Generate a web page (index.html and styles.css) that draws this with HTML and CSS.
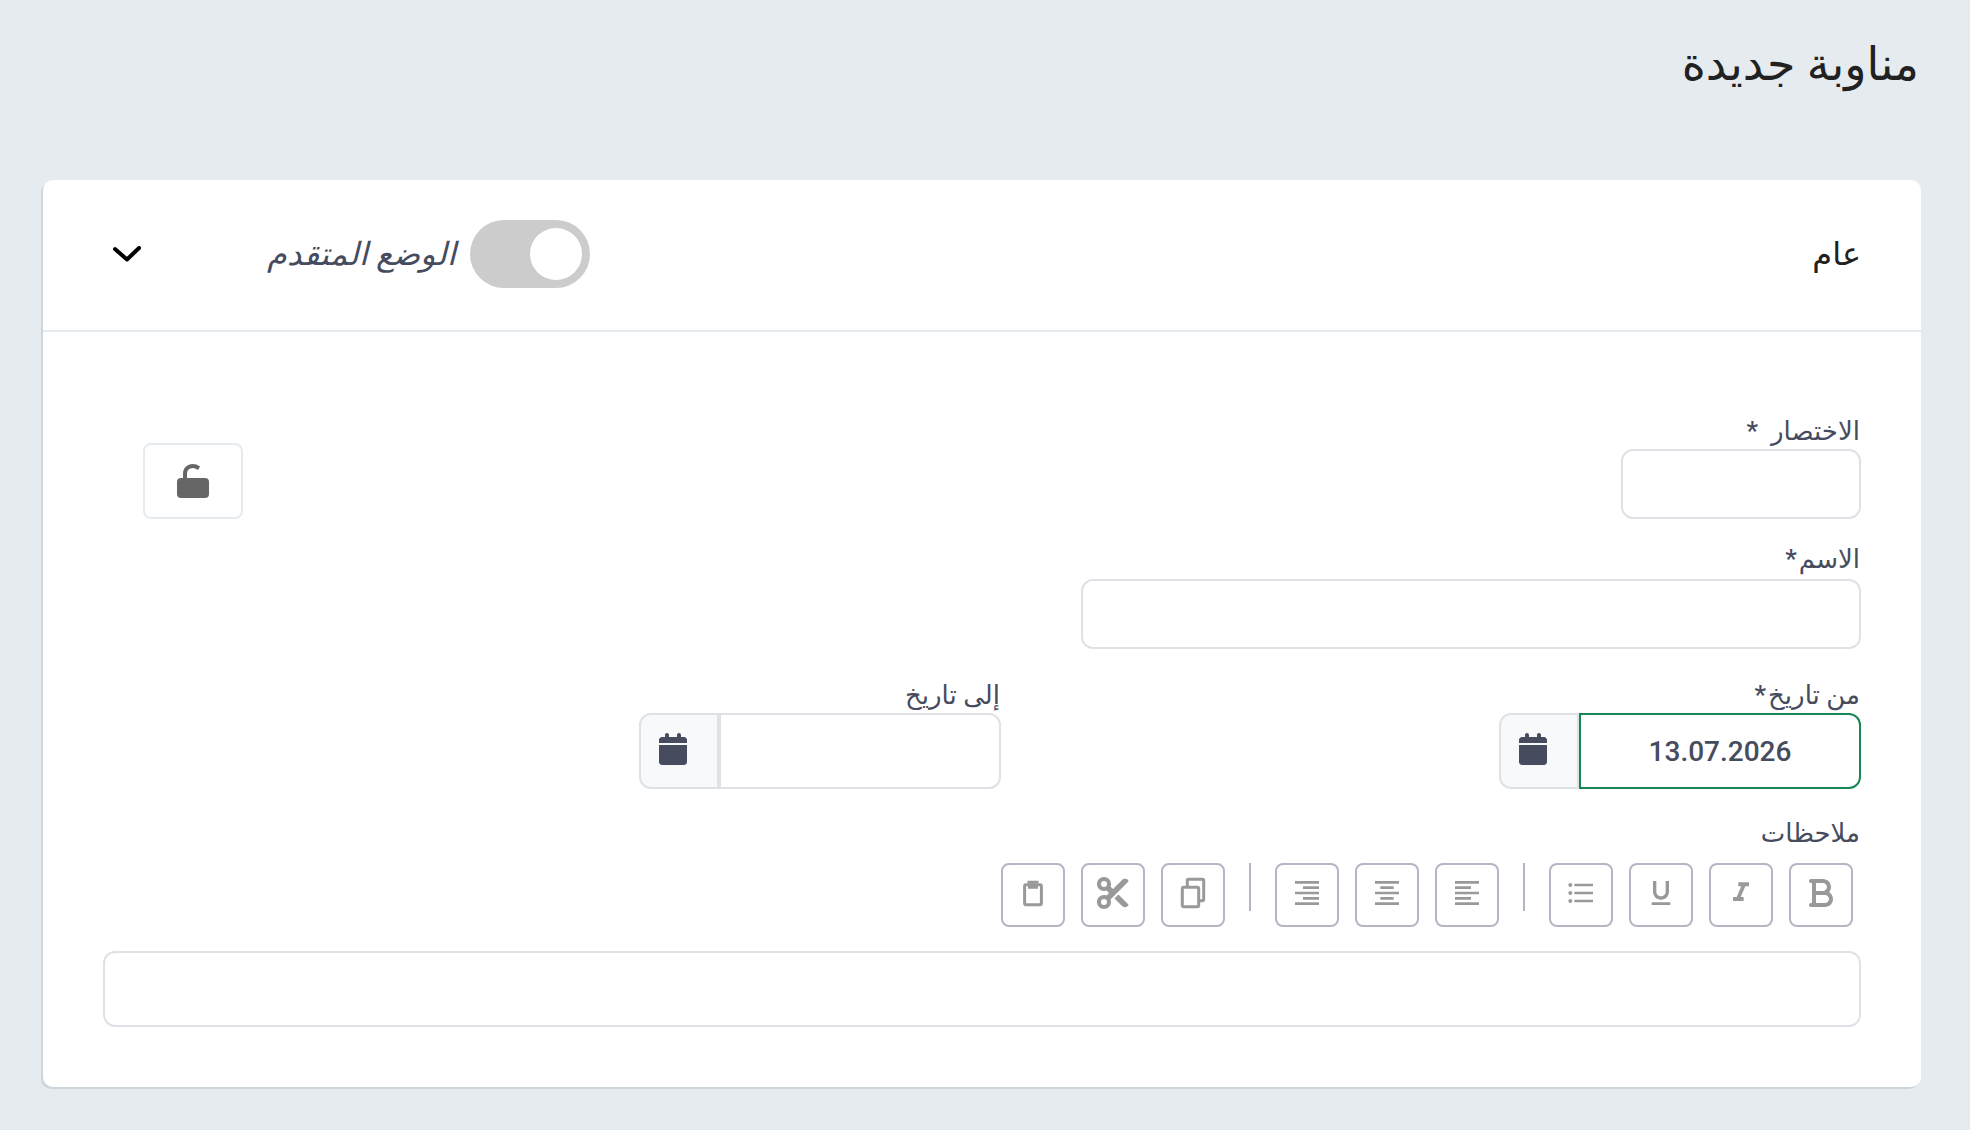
FILE: index.html
```html
<!DOCTYPE html>
<html lang="ar" dir="rtl">
<head>
    <meta charset="UTF-8">
    <meta name="viewport" content="width=device-width, initial-scale=1.0">
    <title>مناوبة جديدة</title>
    <link rel="stylesheet" href="styles.css">
</head>
<body>
    <h1>مناوبة جديدة</h1>

    <form class="card">
        <div class="card-header">
            <h2>عام</h2>
            <div class="header-tools">
                <label class="switch-label">
                    <input type="checkbox" class="switch">
                    <span>الوضع المتقدم</span>
                </label>
                <button type="button" class="collapse-btn" aria-label="طي">
                    <svg width="28" height="16" viewBox="0 0 28 16" fill="none" stroke="#000" stroke-width="4" stroke-linecap="round" stroke-linejoin="round"><path d="M2 3l12 10.500L26 2"/></svg>
                </button>
            </div>
        </div>

        <div class="card-body">
            <div class="row">
                <div class="field short">
                    <label for="shortName">الاختصار &nbsp;*</label>
                    <input type="text" id="shortName">
                </div>
                <button type="button" class="lock-btn" aria-label="قفل">
                    <svg width="32" height="34" viewBox="0 0 32 34"><rect y="14" width="32" height="20" rx="4" fill="#666"/><path d="M8 16V10C8 2.500 15.500 0 22 4.200" fill="none" stroke="#666" stroke-width="4"/></svg>
                </button>
            </div>

            <div class="field name">
                <label for="fullName">الاسم<span class="required">*</span></label>
                <input type="text" id="fullName">
            </div>

            <div class="dates">
                <div class="field">
                    <label for="fromDate">من تاريخ<span class="required">*</span></label>
                    <div class="date-group">
                        <input type="text" id="fromDate" class="valid" value="13.07.2026">
                        <button type="button" aria-label="التقويم">
                            <svg width="28" height="32" viewBox="0 0 448 512" fill="currentColor"><path d="M96 32V64H48C21.500 64 0 85.500 0 112v48H448V112c0-26.500-21.500-48-48-48H352V32c0-17.700-14.300-32-32-32s-32 14.300-32 32V64H160V32c0-17.700-14.300-32-32-32S96 14.300 96 32zM448 192H0V464c0 26.500 21.500 48 48 48H400c26.500 0 48-21.500 48-48V192z"/></svg>
                        </button>
                    </div>
                </div>
                <div class="field">
                    <label for="toDate">إلى تاريخ</label>
                    <div class="date-group">
                        <input type="text" id="toDate">
                        <button type="button" aria-label="التقويم">
                            <svg width="28" height="32" viewBox="0 0 448 512" fill="currentColor"><path d="M96 32V64H48C21.500 64 0 85.500 0 112v48H448V112c0-26.500-21.500-48-48-48H352V32c0-17.700-14.300-32-32-32s-32 14.300-32 32V64H160V32c0-17.700-14.300-32-32-32S96 14.300 96 32zM448 192H0V464c0 26.500 21.500 48 48 48H400c26.500 0 48-21.500 48-48V192z"/></svg>
                        </button>
                    </div>
                </div>
            </div>

            <div class="field notes">
                <label for="notes">ملاحظات</label>
                <div class="toolbar">
                    <button type="button" aria-label="عريض">
                        <svg viewBox="-64 0 512 512"><path d="M0 64C0 46.300 14.300 32 32 32H80 96 224c70.700 0 128 57.300 128 128c0 31.300-11.300 60.100-30 82.300c37.100 22.400 62 63.100 62 109.700c0 70.700-57.300 128-128 128H96 80 32c-17.700 0-32-14.300-32-32s14.300-32 32-32H48V256 96H32C14.300 96 0 81.700 0 64zM224 224c35.300 0 64-28.700 64-64s-28.700-64-64-64H112V224H224zM112 288V416H256c35.300 0 64-28.700 64-64s-28.700-64-64-64H224 112z"/></svg>
                    </button>
                    <button type="button" aria-label="مائل">
                        <svg viewBox="0 0 24 24"><path d="M10 4v3h2.210l-3.420 8H6v3h8v-3h-2.210l3.420-8H18V4z"/></svg>
                    </button>
                    <button type="button" aria-label="تسطير">
                        <svg viewBox="0 0 24 24"><path d="M12 17c3.310 0 6-2.690 6-6V3h-2.500v8c0 1.930-1.570 3.500-3.500 3.500S8.500 12.930 8.500 11V3H6v8c0 3.310 2.690 6 6 6zm-7 2v2h14v-2H5z"/></svg>
                    </button>
                    <button type="button" aria-label="قائمة">
                        <svg viewBox="0 0 24 24"><circle cx="4" cy="6" r="1.500"/><circle cx="4" cy="12" r="1.500"/><circle cx="4" cy="18" r="1.500"/><path d="M7 5h14v2H7zM7 11h14v2H7zM7 17h14v2H7z"/></svg>
                    </button>
                    <span class="separator"></span>
                    <button type="button" aria-label="محاذاة لليسار">
                        <svg viewBox="0 0 24 24"><path d="M3 3h18v2H3zM3 7h12v2H3zM3 11h18v2H3zM3 15h12v2H3zM3 19h18v2H3z"/></svg>
                    </button>
                    <button type="button" aria-label="توسيط">
                        <svg viewBox="0 0 24 24"><path d="M3 3h18v2H3zM7 7h10v2H7zM3 11h18v2H3zM7 15h10v2H7zM3 19h18v2H3z"/></svg>
                    </button>
                    <button type="button" aria-label="محاذاة لليمين">
                        <svg viewBox="0 0 24 24"><path d="M3 3h18v2H3zM9 7h12v2H9zM3 11h18v2H3zM9 15h12v2H9zM3 19h18v2H3z"/></svg>
                    </button>
                    <span class="separator"></span>
                    <button type="button" aria-label="نسخ">
                        <svg viewBox="0 0 32 32" class="outline"><rect x="5.300" y="10.300" width="16.400" height="19.400" rx="1.500"/><path d="M10.300 9V3.500q0-1.200 1.200-1.200h14q1.200 0 1.200 1.200v19q0 1.200-1.200 1.200H23"/></svg>
                    </button>
                    <button type="button" aria-label="قص">
                        <svg viewBox="0 0 512 512"><path d="M256 192l-39.500-39.500c4.900-12.600 7.500-26.200 7.500-40.500C224 50.100 173.900 0 112 0S0 50.100 0 112s50.100 112 112 112c14.300 0 27.900-2.700 40.500-7.500L192 256l-39.500 39.500c-12.600-4.900-26.200-7.500-40.500-7.500C50.100 288 0 338.100 0 400s50.100 112 112 112s112-50.100 112-112c0-14.300-2.700-27.900-7.500-40.500L499.200 76.800c7.100-7.100 7.100-18.500 0-25.600c-28.300-28.300-74.100-28.300-102.400 0L256 192zm22.600 150.600L396.800 460.800c28.300 28.300 74.100 28.300 102.400 0c7.100-7.100 7.100-18.500 0-25.600L342.600 278.600l-64 64zM64 112a48 48 0 1 1 96 0 48 48 0 1 1 -96 0zm48 240a48 48 0 1 1 0 96 48 48 0 1 1 0-96z"/></svg>
                    </button>
                    <button type="button" aria-label="لصق">
                        <svg viewBox="0 0 32 32" class="outline"><rect x="7.600" y="7.800" width="16.800" height="20" rx="1.500"/><path d="M12 6.500V5.200h8v1.300M11 10.300h10"/></svg>
                    </button>
                </div>
                <textarea id="notes" rows="1"></textarea>
            </div>
        </div>
    </form>
</body>
</html>
```

FILE: styles.css
```css
* {
    box-sizing: border-box;
}

body {
    margin: 0;
    padding: 24px 49px 40px 43px;
    font-family: Roboto, "DejaVu Sans", sans-serif;
    font-size: 26px;
    font-weight: 500;
    line-height: 36px;
    background-color: #e5ebef;
    color: #464c5e;
}

h1, h2 {
    margin: 0;
    font-weight: 500;
    color: #212121;
}

h1 {
    margin-bottom: 76px;
    padding: 0 2px;
    font-size: 46px;
    line-height: 80px;
}

h2 {
    font-size: 32px;
    line-height: 40px;
}

button {
    display: flex;
    align-items: center;
    justify-content: center;
    padding: 0;
    background-color: #fff;
    color: inherit;
    cursor: pointer;
}

.card {
    background-color: #fff;
    border-radius: 10px;
    box-shadow: -2px 2px 0 #cdd7db;
}

.card-header {
    display: flex;
    align-items: center;
    justify-content: space-between;
    height: 152px;
    padding: 0 60px 2px;
    border-bottom: 2px solid #e5ebef;
}

.header-tools, .switch-label {
    display: flex;
    align-items: center;
}

.switch-label {
    gap: 14px;
    font-size: 32px;
    font-style: italic;
    font-weight: 400;
}

/* Interruptor del modo avanzado */
.switch {
    appearance: none;
    width: 120px;
    height: 68px;
    margin: 0;
    padding: 8px;
    border-radius: 34px;
    background-color: #ccc;
}

.switch::before {
    content: "";
    display: block;
    width: 52px;
    height: 52px;
    border-radius: 50%;
    background-color: #fff;
}

.collapse-btn {
    width: 48px;
    height: 40px;
    margin-right: 116px;
    border: none;
}

.card-body {
    padding: 81px 60px 60px;
}

.row {
    display: flex;
    align-items: flex-end;
    justify-content: space-between;
    padding-left: 40px;
}

.field label {
    display: block;
    padding: 0 1px;
}

.required {
    margin-right: 2px;
}

.field input, .field textarea {
    display: block;
    width: 100%;
    height: 70px;
    padding: 12px 24px;
    border: 2px solid #dee2e6;
    border-radius: 12px;
    background-color: #fff;
    color: inherit;
    font: inherit;
    font-size: 28px;
}

.short {
    width: 240px;
}

.lock-btn {
    width: 100px;
    height: 76px;
    border: 2px solid #e5ebef;
    border-radius: 8px;
}

.name {
    width: 780px;
    max-width: 100%;
    margin-top: 22px;
}

.name label {
    margin-bottom: 2px;
}

.dates {
    display: grid;
    grid-template-columns: 1fr 1fr;
    gap: 2px;
    margin-top: 28px;
    padding-left: 40px;
}

.date-group {
    display: flex;
    width: 362px;
}

.date-group input {
    flex: 1;
    min-width: 0;
    height: 76px;
    border-radius: 0 12px 12px 0;
    text-align: center;
}

.date-group input.valid {
    border-color: #198754;
}

.date-group button {
    justify-content: flex-end;
    width: 80px;
    padding: 0 0 4px 18px;
    border: 2px solid #dee2e6;
    border-radius: 12px 0 0 12px;
    background-color: #f8f9fa;
}

.notes {
    margin-top: 26px;
}

.toolbar {
    display: flex;
    flex-wrap: wrap;
    gap: 16px;
    margin: 12px 8px 24px;
}

.toolbar button {
    width: 64px;
    height: 64px;
    padding-bottom: 4px;
    border: 2px solid #b8b4c6;
    border-radius: 8px;
}

.toolbar svg {
    width: 32px;
    height: 32px;
    fill: #999;
}

.toolbar svg.outline {
    fill: none;
    stroke: #999;
    stroke-width: 3;
}

.separator {
    width: 2px;
    height: 48px;
    margin: 0 8px;
    background-color: #b8b4c6;
}

.field textarea {
    height: 76px;
    resize: none;
}
```
